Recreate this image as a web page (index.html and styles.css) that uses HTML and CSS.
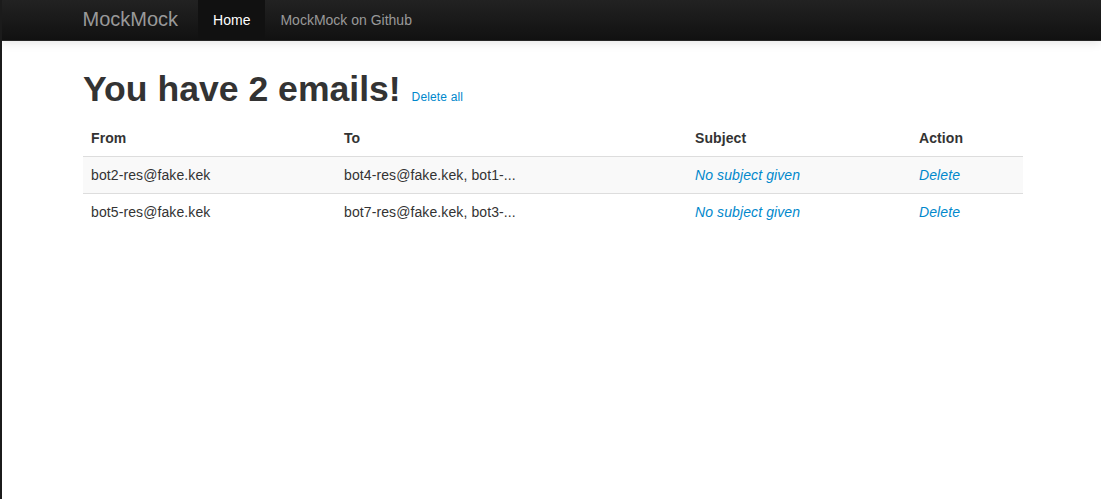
FILE: index.html
```html
<!DOCTYPE html>
<html>
<head>
<meta charset="utf-8">
<title>MockMock</title>
<link rel="stylesheet" href="styles.css">
</head>
<body>
<header class="navbar">
  <div class="container nav-inner">
    <a class="brand" href="#">MockMock</a>
    <ul class="nav">
      <li class="active"><a href="#">Home</a></li>
      <li><a href="#">MockMock on Github</a></li>
    </ul>
  </div>
</header>
<main class="container main">
  <h1 class="title">You have 2 emails! <small><a href="#">Delete all</a></small></h1>
  <table class="table">
    <thead>
      <tr>
        <th class="c-from">From</th>
        <th class="c-to">To</th>
        <th class="c-subject">Subject</th>
        <th class="c-action">Action</th>
      </tr>
    </thead>
    <tbody>
      <tr>
        <td>bot2-res@fake.kek</td>
        <td>bot4-res@fake.kek, bot1-...</td>
        <td><a href="#"><em>No subject given</em></a></td>
        <td><a href="#"><em>Delete</em></a></td>
      </tr>
      <tr>
        <td>bot5-res@fake.kek</td>
        <td>bot7-res@fake.kek, bot3-...</td>
        <td><a href="#"><em>No subject given</em></a></td>
        <td><a href="#"><em>Delete</em></a></td>
      </tr>
    </tbody>
  </table>
</main>
</body>
</html>
```
FILE: styles.css
```css
html, body {
  height: 100%;
}
body {
  margin: 0;
  padding-left: 3px;
  border-left: 2px solid #1b1b1b;
  background: #fff;
  color: #333;
  font-family: "Liberation Sans", Arial, sans-serif;
  font-size: 14px;
  line-height: 20px;
  box-sizing: border-box;
}
a {
  color: #0088cc;
  text-decoration: none;
}
.container {
  width: 940px;
  margin: 0 auto;
}
.navbar {
  margin-left: -5px;
  height: 40px;
  background: linear-gradient(to bottom, #222222, #111111);
  border-bottom: 1px solid #252525;
  box-shadow: 0 1px 10px rgba(0, 0, 0, 0.12);
  position: relative;
  z-index: 2;
}
.nav-inner {
  display: flex;
  align-items: stretch;
  height: 40px;
  position: relative;
  left: 2px;
}
.brand {
  display: block;
  padding: 9px 20px 11px;
  margin-left: -20px;
  font-size: 20px;
  line-height: 20px;
  color: #999;
  font-weight: 200;
}
.nav {
  display: flex;
  list-style: none;
  margin: 0;
  padding: 0;
}
.nav a {
  display: block;
  padding: 10px 15px;
  color: #999;
  line-height: 20px;
}
.nav .active a {
  background: #111;
  color: #fff;
}
.main {
  padding-top: 18px;
}
.title {
  margin: 10px 0 11px;
  font-size: 35.6px;
  line-height: 40px;
  font-weight: bold;
  color: #333;
}
.title small {
  font-size: 12px;
  font-weight: normal;
  line-height: 1;
  margin-left: 1px;
  letter-spacing: 0.15px;
}
.table {
  width: 100%;
  border-collapse: collapse;
  border-spacing: 0;
  margin-bottom: 20px;
}
.table th,
.table td {
  padding: 8px;
  line-height: 20px;
  text-align: left;
  vertical-align: top;
  border-top: 1px solid #dddddd;
  letter-spacing: 0.1px;
}
.table th {
  font-weight: bold;
}
.table thead th {
  border-top: 0;
}
.table tbody tr:nth-child(odd) td {
  background: #f9f9f9;
}
.c-from { width: 237px; }
.c-to { width: 335px; }
.c-subject { width: 208px; }
```
